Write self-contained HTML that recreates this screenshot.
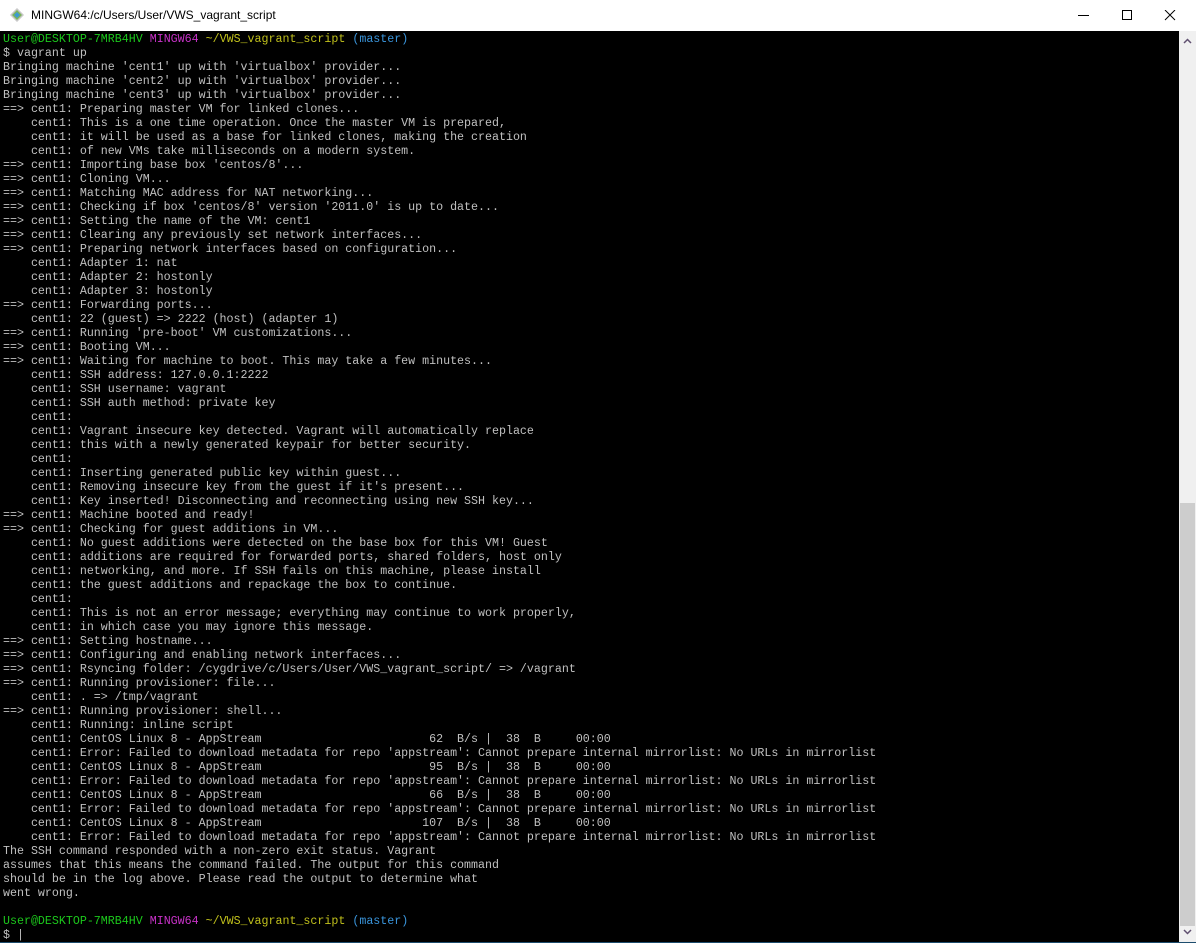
<!DOCTYPE html>
<html><head><meta charset="utf-8"><style>
html,body{margin:0;padding:0;width:1197px;height:944px;overflow:hidden;background:#fff;}
#win{position:absolute;left:0;top:0;width:1196px;height:943px;border-right:1px solid #1d4d6e;border-bottom:1px solid #1d4d6e;border-top:1px solid #1d4d6e;box-sizing:border-box;}
#title{position:absolute;left:0;top:0;width:1197px;height:31px;background:#fff;}
#title .t{position:absolute;left:31px;top:8px;font:12px "Liberation Sans",sans-serif;color:#000;}
#term{position:absolute;left:0;top:31px;width:1179px;height:911px;background:#000;}
pre{margin:0;position:absolute;left:3px;top:2px;font:11.65px/14px "Liberation Mono",monospace;color:#c0c0c0;}
.g{color:#1cc81c}.m{color:#c832c8}.y{color:#c0c01c}.c{color:#3a96dd}
#sb{position:absolute;left:1179px;top:31px;width:17px;height:911px;background:#f0f0f0;}
#thumb{position:absolute;left:1px;top:472px;width:15px;height:423px;background:#cdcdcd;}
</style></head><body>
<div id="win"></div>
<div id="title">
<svg style="position:absolute;left:9px;top:7px" width="16" height="16" viewBox="0 0 16 16"><path d="M8 1 L15 8 L8 15 L1 8Z" fill="#c8c8c8"/><path d="M8 3 L13 8 L8 13 L3 8Z" fill="#7bb35a"/><path d="M5 8 L8 5 L11 8 L8 11Z" fill="#3d9ad1"/></svg>
<div class="t">MINGW64:/c/Users/User/VWS_vagrant_script</div>
<svg style="position:absolute;left:1070px;top:10px" width="120" height="12"><line x1="8" y1="5.5" x2="19" y2="5.5" stroke="#000"/><rect x="52.5" y="0.5" width="9" height="9" fill="none" stroke="#000"/><path d="M95 0 L105 10 M105 0 L95 10" stroke="#000"/></svg>
</div>
<div id="term"><pre><span class="g">User@DESKTOP-7MRB4HV</span> <span class="m">MINGW64</span> <span class="y">~/VWS_vagrant_script</span> <span class="c">(master)</span>
$ vagrant up
Bringing machine 'cent1' up with 'virtualbox' provider...
Bringing machine 'cent2' up with 'virtualbox' provider...
Bringing machine 'cent3' up with 'virtualbox' provider...
==> cent1: Preparing master VM for linked clones...
    cent1: This is a one time operation. Once the master VM is prepared,
    cent1: it will be used as a base for linked clones, making the creation
    cent1: of new VMs take milliseconds on a modern system.
==> cent1: Importing base box 'centos/8'...
==> cent1: Cloning VM...
==> cent1: Matching MAC address for NAT networking...
==> cent1: Checking if box 'centos/8' version '2011.0' is up to date...
==> cent1: Setting the name of the VM: cent1
==> cent1: Clearing any previously set network interfaces...
==> cent1: Preparing network interfaces based on configuration...
    cent1: Adapter 1: nat
    cent1: Adapter 2: hostonly
    cent1: Adapter 3: hostonly
==> cent1: Forwarding ports...
    cent1: 22 (guest) => 2222 (host) (adapter 1)
==> cent1: Running 'pre-boot' VM customizations...
==> cent1: Booting VM...
==> cent1: Waiting for machine to boot. This may take a few minutes...
    cent1: SSH address: 127.0.0.1:2222
    cent1: SSH username: vagrant
    cent1: SSH auth method: private key
    cent1:
    cent1: Vagrant insecure key detected. Vagrant will automatically replace
    cent1: this with a newly generated keypair for better security.
    cent1:
    cent1: Inserting generated public key within guest...
    cent1: Removing insecure key from the guest if it's present...
    cent1: Key inserted! Disconnecting and reconnecting using new SSH key...
==> cent1: Machine booted and ready!
==> cent1: Checking for guest additions in VM...
    cent1: No guest additions were detected on the base box for this VM! Guest
    cent1: additions are required for forwarded ports, shared folders, host only
    cent1: networking, and more. If SSH fails on this machine, please install
    cent1: the guest additions and repackage the box to continue.
    cent1:
    cent1: This is not an error message; everything may continue to work properly,
    cent1: in which case you may ignore this message.
==> cent1: Setting hostname...
==> cent1: Configuring and enabling network interfaces...
==> cent1: Rsyncing folder: /cygdrive/c/Users/User/VWS_vagrant_script/ => /vagrant
==> cent1: Running provisioner: file...
    cent1: . => /tmp/vagrant
==> cent1: Running provisioner: shell...
    cent1: Running: inline script
    cent1: CentOS Linux 8 - AppStream                        62  B/s |  38  B     00:00
    cent1: Error: Failed to download metadata for repo 'appstream': Cannot prepare internal mirrorlist: No URLs in mirrorlist
    cent1: CentOS Linux 8 - AppStream                        95  B/s |  38  B     00:00
    cent1: Error: Failed to download metadata for repo 'appstream': Cannot prepare internal mirrorlist: No URLs in mirrorlist
    cent1: CentOS Linux 8 - AppStream                        66  B/s |  38  B     00:00
    cent1: Error: Failed to download metadata for repo 'appstream': Cannot prepare internal mirrorlist: No URLs in mirrorlist
    cent1: CentOS Linux 8 - AppStream                       107  B/s |  38  B     00:00
    cent1: Error: Failed to download metadata for repo 'appstream': Cannot prepare internal mirrorlist: No URLs in mirrorlist
The SSH command responded with a non-zero exit status. Vagrant
assumes that this means the command failed. The output for this command
should be in the log above. Please read the output to determine what
went wrong.

<span class="g">User@DESKTOP-7MRB4HV</span> <span class="m">MINGW64</span> <span class="y">~/VWS_vagrant_script</span> <span class="c">(master)</span>
$ |</pre></div>
<div id="sb"><div id="thumb"></div>
<svg style="position:absolute;left:4px;top:7px" width="9" height="6"><path d="M1 5 L4.5 1.5 L8 5" stroke="#605070" stroke-width="1.5" fill="none"/></svg>
<svg style="position:absolute;left:4px;top:898px" width="9" height="6"><path d="M1 1 L4.5 4.5 L8 1" stroke="#605070" stroke-width="1.5" fill="none"/></svg>
</div>
</body></html>
